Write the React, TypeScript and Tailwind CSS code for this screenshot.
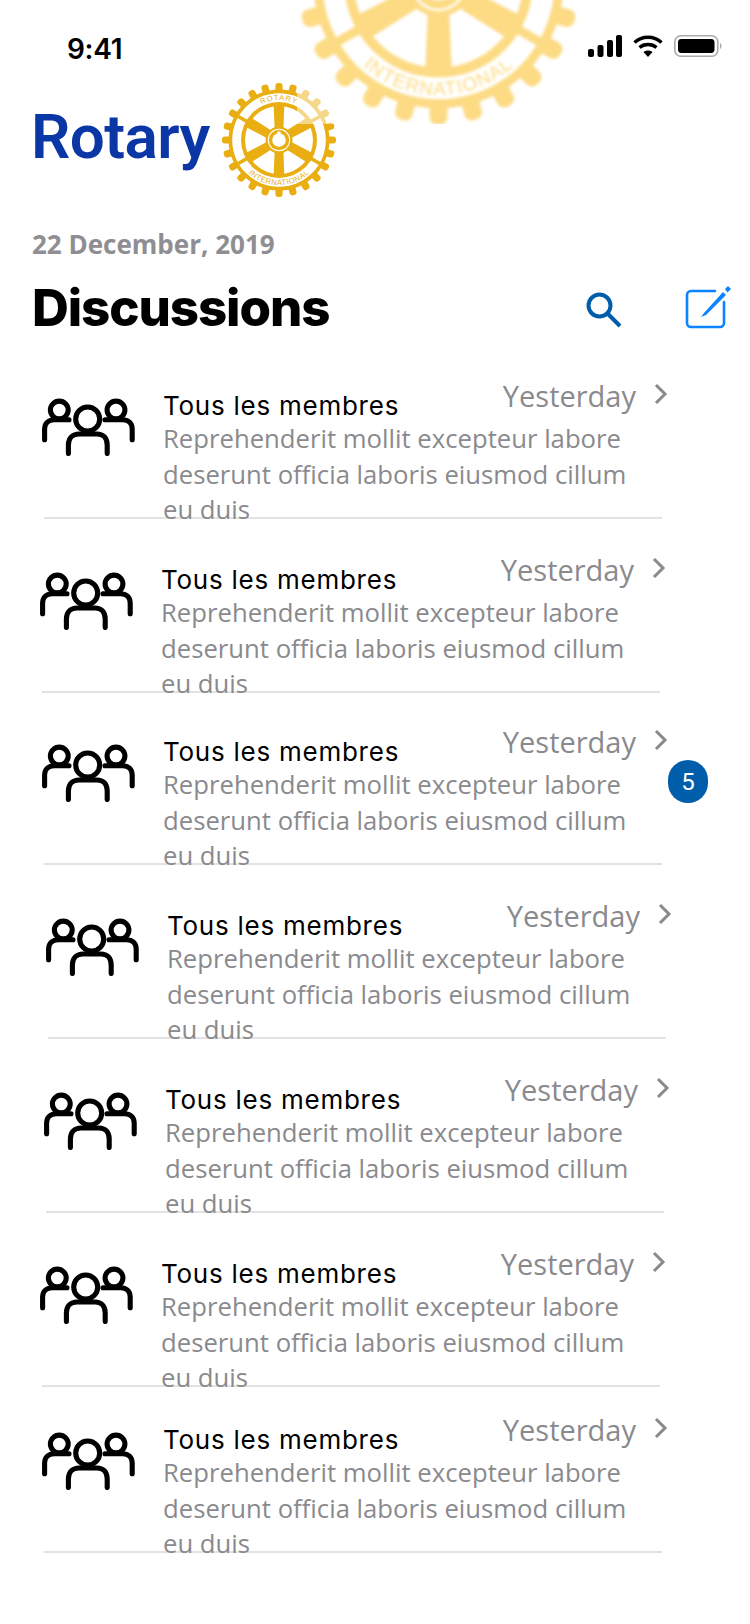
import React from "react";

function Wheel({ id, big, color }: { id: string; big?: boolean; color: string }) {
  const teeth = Array.from({ length: 24 }, (_, i) => i * 15);
  return (
    <svg viewBox="-60 -60 120 120" className="w-full h-full block">
      <defs>
        <path id={id + "top"} d="M -34.6 -20 A 40 40 0 0 1 34.6 -20" />
        <path id={id + "bot"} d="M -39 22.5 A 45 45 0 0 0 39 22.5" />
      </defs>
      {teeth.map((a) => (
        <rect key={a} x="-3.6" y="-57" width="7.2" height="12" rx="3" fill={color} transform={`rotate(${a})`} />
      ))}
      <circle r="50.5" fill={color} />
      <circle r="46.8" fill="#fff" />
      <circle r="38" fill={color} />
      <circle r="34" fill="#fff" />
      {[0, 180].map((a) => (
        <path key={a} d="M -4.2 -8 L -5.4 -36 L 5.4 -36 L 4.2 -8 Z" fill={color} transform={`rotate(${a})`} />
      ))}
      {[60, 120, 240, 300].map((a) => (
        <g key={a} transform={`rotate(${a})`}>
          <path d="M -4.2 -8 L -5.4 -36 L 5.4 -36 L 4.2 -8 Z" fill={color} />
          <rect x="-1.8" y="-48" width="3.6" height="13" fill={color} />
        </g>
      ))}
      <circle r="13.5" fill={color} />
      <circle r="11.2" fill="#fff" />
      <circle r="10.2" fill={color} />
      <circle r="6.8" fill="#fff" />
      <rect x="-1.6" y="-8.5" width="3.2" height="3" fill="#fff" />
      {!big && (
        <text fontSize="7.6" fill={color} fontFamily="'Liberation Sans', sans-serif" letterSpacing="0.9">
          <textPath href={`#${id}top`} startOffset="50%" textAnchor="middle">ROTARY</textPath>
        </text>
      )}
      <text fontSize="7.6" fill={color} fontFamily="'Liberation Sans', sans-serif" letterSpacing="0.5">
        <textPath href={`#${id}bot`} startOffset="50%" textAnchor="middle">INTERNATIONAL</textPath>
      </text>
    </svg>
  );
}

function Group() {
  return (
    <svg viewBox="0 0 93 58" className="w-[93px] h-[58px] block" fill="none" stroke="#000" strokeWidth="5.1" strokeLinecap="round">
      <circle cx="17.3" cy="12" r="8.9" />
      <circle cx="74" cy="12" r="8.9" />
      <circle cx="45.7" cy="21" r="12" />
      <path d="M2.6 41.7 V31 C2.6 25 7 21.7 12.3 21.7 H27" />
      <path d="M90.2 41.7 V31 C90.2 25 86 21.7 80.7 21.7 H63" />
      <path d="M26.4 55.5 V47 C26.4 40 31 36 37 36 H55 C61 36 65.2 40 65.2 47 V55.5" />
    </svg>
  );
}

function Row({ ml, h, badge }: { ml: string; h: string; badge?: boolean }) {
  return (
    <div className={`relative w-[618px] border-b-2 border-[#e2e2e2] ${ml} ${h}`}>
      <div className="absolute left-0 right-0 bottom-[-19px] flex">
        <div className="w-[120px] shrink-0 -ml-[2px] mr-[1px] pt-[27px] h-[165px]">
          <Group />
        </div>
        <div className="flex-1 min-w-0">
          <div className="flex items-start justify-between h-[46px]">
            <span className="mt-[18px] text-[26px] leading-[34px] text-black font-['Inter',sans-serif] tracking-[0.75px]">Tous les membres</span>
            <div className="flex items-center mr-[-6px] mt-[5px]">
              <span className="text-[29px] leading-[40px] text-[#8a8a8e] font-['Open_Sans',sans-serif]">Yesterday</span>
              <svg viewBox="0 0 14 22" className="w-[14px] h-[22px] ml-[18px] -mt-[4px]" fill="none" stroke="#8a8a8e" strokeWidth="3">
                <path d="M2 2 L11 11 L2 20" />
              </svg>
            </div>
          </div>
          <p className="mt-[4px] w-[470px] text-[25.7px] leading-[35.5px] text-[#8a8a8e] font-['Open_Sans',sans-serif]">
            Reprehenderit mollit excepteur labore deserunt officia laboris eiusmod cillum eu duis
          </p>
        </div>
      </div>
      {badge && (
        <div className="absolute left-[624px] bottom-[60px] w-[40px] h-[43px] rounded-full bg-[#005daa] text-white flex items-center justify-center text-[24px] font-['Roboto',sans-serif]">
          5
        </div>
      )}
    </div>
  );
}

export default function App() {
  return (
    <div className="relative w-[750px] h-[1624px] overflow-hidden bg-white font-['Open_Sans',sans-serif]">
      <div className="flex items-center justify-between h-[50px] mt-[24px] pl-[67px] pr-[28px]">
        <span className="text-[28px] font-semibold text-black font-['Inter',sans-serif] tracking-[-0.3px]">9:41</span>
        <div className="flex items-center gap-[11px] -mt-[6px]">
          <svg viewBox="0 0 34 22" className="w-[34px] h-[22px]" fill="#000">
            <rect x="0" y="14" width="6" height="8" rx="2" />
            <rect x="9.5" y="10" width="6" height="12" rx="2" />
            <rect x="19" y="5" width="6" height="17" rx="2" />
            <rect x="28" y="0" width="6" height="22" rx="2" />
          </svg>
          <svg viewBox="0 0 30 22" className="w-[30px] h-[22px]" fill="none" stroke="#000" strokeWidth="3.4">
            <path d="M1.5 7.5 C9 0.5 21 0.5 28.5 7.5" />
            <path d="M6.5 12.5 C11 8.5 19 8.5 23.5 12.5" />
            <path d="M15 22 L10.5 17 C13 15 17 15 19.5 17 Z" fill="#000" stroke="none" />
          </svg>
          <svg viewBox="0 0 48 22" className="w-[48px] h-[22px]">
            <rect x="0.8" y="0.8" width="43" height="20.4" rx="6" fill="none" stroke="#aaa" strokeWidth="1.6" />
            <rect x="4" y="4" width="36.5" height="14" rx="3.4" fill="#000" />
            <path d="M46 8 C48 9 48 13 46 14 Z" fill="#aaa" />
          </svg>
        </div>
      </div>

      <div className="flex items-center h-[120px] mt-[6px] pl-[31px]">
        <span className="w-[188px] text-[62px] leading-none font-semibold text-[#0a36a6] font-['Roboto',sans-serif] tracking-[-0.6px] -mt-[6px]">Rotary</span>
        <div className="w-[120px] h-[120px] shrink-0">
          <Wheel id="a" color="#e9ae12" />
        </div>
      </div>

      <div className="mt-[26px] pl-[32px] text-[26px] leading-[36px] font-bold text-[#8e8e93]">22 December, 2019</div>

      <div className="flex items-center h-[60px] mt-[15px] pl-[32px] pr-[20px]">
        <h1 className="text-[51px] leading-none font-extrabold text-black font-['Inter',sans-serif] tracking-[-1.1px]">Discussions</h1>
        <svg viewBox="0 0 36 36" className="w-[36px] h-[36px] ml-auto mt-[6px]" fill="none" stroke="#005daa" strokeWidth="4">
          <circle cx="13.5" cy="13.5" r="11" />
          <path d="M21.5 21.5 L34 34" />
        </svg>
        <svg viewBox="0 0 46 46" className="w-[46px] h-[46px] ml-[63px] mr-[-1px]" fill="none" stroke="#0a84ff" strokeWidth="2.6">
          <path d="M30 7 H6 a4 4 0 0 0 -4 4 V39 a4 4 0 0 0 4 4 H35 a4 4 0 0 0 4 -4 V18" strokeLinecap="round" />
          <path d="M19 29 L38 8 L41 11 L21 31 L16 33 Z" fill="#0a84ff" stroke="none" />
          <path d="M40 5 L43 2 L46 5 L42.5 8.5 Z" fill="#0a84ff" stroke="none" />
        </svg>
      </div>

      <div className="flex flex-col mt-[12px]">
        <Row ml="ml-[44px]" h="h-[170px]" />
        <Row ml="ml-[42px]" h="h-[174px]" />
        <Row ml="ml-[44px]" h="h-[172px]" badge />
        <Row ml="ml-[48px]" h="h-[174px]" />
        <Row ml="ml-[46px]" h="h-[174px]" />
        <Row ml="ml-[42px]" h="h-[174px]" />
        <Row ml="ml-[44px]" h="h-[166px]" />
      </div>

      <div className="absolute left-[297px] top-0 w-[287px] h-[124px] bg-white/50 overflow-hidden">
        <div className="absolute left-[-7px] top-[-165px] w-[297px] h-[297px] blur-[1.5px]">
          <Wheel id="b" big color="#fcdb84" />
        </div>
      </div>
    </div>
  );
}
